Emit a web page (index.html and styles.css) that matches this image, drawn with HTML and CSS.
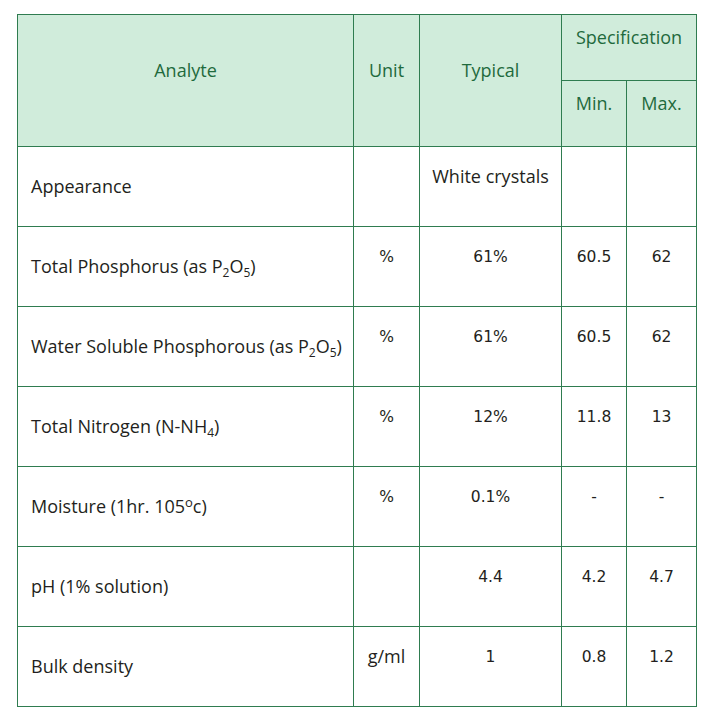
FILE: index.html
```html
<!DOCTYPE html>
<html>
<head>
<meta charset="utf-8">
<link rel="stylesheet" href="styles.css">
</head>
<body>
<table class="spec">
  <colgroup>
    <col class="c-analyte"><col class="c-unit"><col class="c-typ"><col class="c-min"><col class="c-max">
  </colgroup>
  <thead>
    <tr class="h1">
      <th rowspan="2" class="hm">Analyte</th>
      <th rowspan="2" class="hm">Unit</th>
      <th rowspan="2" class="hm">Typical</th>
      <th colspan="2" class="hm">Specification</th>
    </tr>
    <tr class="h2">
      <th class="hm">Min.</th>
      <th class="hm">Max.</th>
    </tr>
  </thead>
  <tbody>
    <tr>
      <td class="lbl">Appearance</td>
      <td class="val"></td>
      <td class="val txt">White crystals</td>
      <td class="val"></td>
      <td class="val"></td>
    </tr>
    <tr>
      <td class="lbl">Total Phosphorus (as P<sub>2</sub>O<sub>5</sub>)</td>
      <td class="val">%</td>
      <td class="val">61%</td>
      <td class="val">60.5</td>
      <td class="val">62</td>
    </tr>
    <tr>
      <td class="lbl">Water Soluble Phosphorous (as P<sub>2</sub>O<sub>5</sub>)</td>
      <td class="val">%</td>
      <td class="val">61%</td>
      <td class="val">60.5</td>
      <td class="val">62</td>
    </tr>
    <tr>
      <td class="lbl">Total Nitrogen (N-NH<sub>4</sub>)</td>
      <td class="val">%</td>
      <td class="val">12%</td>
      <td class="val">11.8</td>
      <td class="val">13</td>
    </tr>
    <tr>
      <td class="lbl">Moisture (1hr. 105<sup>o</sup>c)</td>
      <td class="val">%</td>
      <td class="val">0.1%</td>
      <td class="val">-</td>
      <td class="val">-</td>
    </tr>
    <tr>
      <td class="lbl">pH (1% solution)</td>
      <td class="val"></td>
      <td class="val">4.4</td>
      <td class="val">4.2</td>
      <td class="val">4.7</td>
    </tr>
    <tr>
      <td class="lbl">Bulk density</td>
      <td class="val txt">g/ml</td>
      <td class="val">1</td>
      <td class="val">0.8</td>
      <td class="val">1.2</td>
    </tr>
  </tbody>
</table>
</body>
</html>
```
FILE: styles.css
```css
html, body {
  margin: 0;
  padding: 0;
  background: #ffffff;
}
body {
  padding: 14px 0 0 17px;
}
.spec {
  border-collapse: collapse;
  table-layout: fixed;
  width: 679px;
  font-family: "Open Sans", sans-serif;
  font-size: 18px;
  line-height: 24px;
  color: #231f20;
}
.c-analyte { width: 336px; }
.c-unit { width: 66px; }
.c-typ { width: 142px; }
.c-min { width: 65px; }
.c-max { width: 70px; }
.spec th, .spec td {
  border: 1px solid #2f7c50;
  padding: 0;
}
.spec th {
  background: #d0ecdb;
  color: #1f6a3d;
  font-weight: normal;
  text-align: center;
}
.h1 { height: 66px; }
.h2 { height: 66px; }
.hm {
  vertical-align: middle;
  padding-bottom: 22px !important;
}
.spec tbody tr { height: 80px; }
.lbl {
  vertical-align: middle;
  padding-left: 13px !important;
  padding-bottom: 2px !important;
  text-align: left;
}
.val {
  vertical-align: top;
  text-align: center;
  padding-top: 18px !important;
  font-family: "DejaVu Sans", sans-serif;
  font-size: 15.5px;
}
.val.txt {
  font-family: "Open Sans", sans-serif;
  font-size: 18px;
  padding-top: 17px !important;
}
sub {
  font-size: 12px;
  vertical-align: -4px;
  line-height: 0;
}
sup {
  font-size: 13px;
  vertical-align: 6px;
  line-height: 0;
}
```
